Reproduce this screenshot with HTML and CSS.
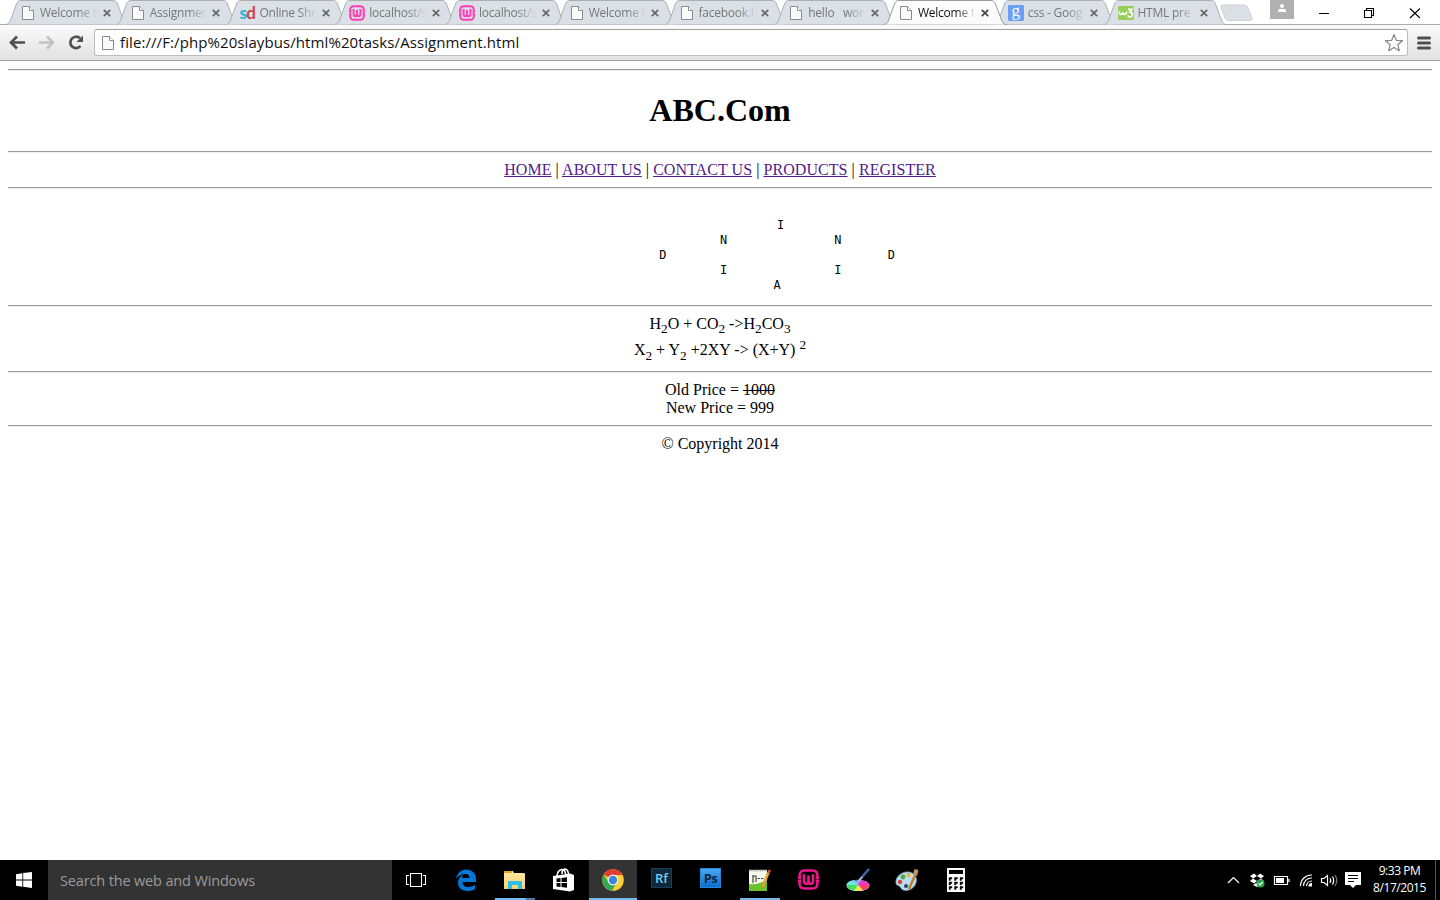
FILE: index.html
```
<!DOCTYPE html>
<html lang="en">
<head>
<meta charset="utf-8">
<title>Assignment</title>
<link rel="stylesheet" href="styles.css">
</head>
<body>
<svg class="defs" width="0" height="0">
  <defs>
    <linearGradient id="active" x1="0" y1="0" x2="0" y2="1"><stop offset="0" stop-color="#fff"/><stop offset="1" stop-color="#fafafa"/></linearGradient>
    <linearGradient id="folder" x1="0" y1="0" x2="0" y2="1"><stop offset="0" stop-color="#ffe9a6"/><stop offset="1" stop-color="#f8d36c"/></linearGradient>
    <symbol id="shape" viewBox="0 0 126 25"><path d="M0 24.5C3 24 4 22 5 19L10.500 4C11.500 1.500 12.500.5 15 .5H107C109.500.5 110.500 1.500 111.500 4L117.500 20C119 23.500 120 24.500 123 24.500"/></symbol>
    <symbol id="page" viewBox="0 0 16 16"><path d="M2.500 1.500H9.500L13.500 5.500V14.500H2.500Z" fill="#fafafa" stroke="#8b8b8b"/><path d="M9.500 1.500V5.500H13.500" fill="#fff" stroke="#8b8b8b"/></symbol>
    <symbol id="wamp" viewBox="0 0 16 16"><path d="M1.200 7V5Q1.200 1.200 5 1.200H11Q14.800 1.200 14.800 5V7M1.200 9V11Q1.200 14.800 5 14.800H11Q14.800 14.800 14.800 11V9M0 6.800H2.500M0 9.200H2.500M13.500 6.800H16M13.500 9.200H16" fill="none" stroke="currentColor" stroke-width="1.900"/><path d="M4.600 4V9Q4.600 11.300 6.300 11.300Q8 11.300 8 9V5V9Q8 11.300 9.700 11.300Q11.400 11.300 11.400 9V4" fill="none" stroke="currentColor" stroke-width="2"/></symbol>
    <symbol id="close" viewBox="0 0 8 8"><path d="M.8.8L7.200 7.200M7.200.8L.8 7.200" stroke="currentColor" stroke-width="1.700"/></symbol>
  </defs>
</svg>
<div class="screen">
  <div class="tabstrip">
    <div class="tab"><svg class="shape"><use href="#shape"/></svg><svg class="fav"><use href="#page"/></svg><span class="label">Welcome t</span><svg class="close"><use href="#close"/></svg></div>
    <div class="tab"><svg class="shape"><use href="#shape"/></svg><svg class="fav"><use href="#page"/></svg><span class="label">Assignmen</span><svg class="close"><use href="#close"/></svg></div>
    <div class="tab"><svg class="shape"><use href="#shape"/></svg><span class="fav sd"><b>s</b><i>d</i></span><span class="label">Online Sho</span><svg class="close"><use href="#close"/></svg></div>
    <div class="tab"><svg class="shape"><use href="#shape"/></svg><svg class="fav pink"><use href="#wamp"/></svg><span class="label">localhost/s</span><svg class="close"><use href="#close"/></svg></div>
    <div class="tab"><svg class="shape"><use href="#shape"/></svg><svg class="fav pink"><use href="#wamp"/></svg><span class="label">localhost/s</span><svg class="close"><use href="#close"/></svg></div>
    <div class="tab"><svg class="shape"><use href="#shape"/></svg><svg class="fav"><use href="#page"/></svg><span class="label">Welcome t</span><svg class="close"><use href="#close"/></svg></div>
    <div class="tab"><svg class="shape"><use href="#shape"/></svg><svg class="fav"><use href="#page"/></svg><span class="label">facebook.h</span><svg class="close"><use href="#close"/></svg></div>
    <div class="tab"><svg class="shape"><use href="#shape"/></svg><svg class="fav"><use href="#page"/></svg><span class="label">hello &nbsp; wor</span><svg class="close"><use href="#close"/></svg></div>
    <div class="tab current"><svg class="shape"><use href="#shape"/></svg><svg class="fav"><use href="#page"/></svg><span class="label">Welcome t</span><svg class="close"><use href="#close"/></svg></div>
    <div class="tab"><svg class="shape"><use href="#shape"/></svg><span class="fav google">g</span><span class="label">css - Goog</span><svg class="close"><use href="#close"/></svg></div>
    <div class="tab"><svg class="shape"><use href="#shape"/></svg><svg class="fav" viewBox="0 0 16 16"><rect y="1" width="16" height="14" rx="1" fill="#98cf5c"/><path d="M1 6.500Q1.500 9.500 3 9.500Q4.500 9.500 4.800 7Q5 9.500 6.500 9.500Q8 9.500 9 6.500" fill="none" stroke="#fff" stroke-width="1.600"/><path d="M10 4.300H14L12 7Q14.300 7 14.300 9.500Q14 12 12 12Q10.200 12 9.800 10.500" fill="none" stroke="#fff" stroke-width="1.700"/></svg><span class="label">HTML pre</span><svg class="close"><use href="#close"/></svg></div>
    <svg class="newtab" viewBox="0 0 34 18"><path d="M3 1H24Q27 1 28 4L32 14Q33 16.500 30 16.500H9Q6 16.500 5 14L1 3.500Q.5 1 3 1Z" fill="#dbe0e7" stroke="#cdd0d4"/></svg>
    <div class="controls">
      <svg width="24" height="19"><rect width="24" height="19" fill="#b0b0b0"/><circle cx="12" cy="6" r="2" fill="#fff"/><path d="M8 12V11Q8 9 10 9H14Q16 9 16 11V12Z" fill="#fff"/></svg>
      <svg class="win" width="120" height="26"><path d="M13 13.500H23M58.500 10.500H65.500V17.500H58.500ZM60.500 10V8.500H67.500V15.500H66" fill="none" stroke="#000" stroke-width="1.100"/><path d="M104 8.500L114 18M114 8.500L104 18" stroke="#000" stroke-width="1.200"/></svg>
    </div>
  </div>
  <div class="toolbar">
    <svg class="nav" width="94" height="35"><g fill="none" stroke-width="2.700"><path d="M11.500 17.500H25M17 11.500L11 17.500L17 23.500" stroke="#505050"/><path d="M39 17.500H52M47 11.500L53 17.500L47 23.500" stroke="#c2c2c2"/><path d="M80.500 21A5.700 5.700 0 1 1 80 13.300" stroke="#505050"/></g><path d="M83 10.500V17H76.500Z" fill="#505050"/></svg>
    <div class="omnibox">
      <svg class="fav" viewBox="0 0 16 16"><use href="#page"/></svg>
      <span class="url">file:///F:/php%20slaybus/html%20tasks/Assignment.html</span>
      <svg class="star" viewBox="0 0 20 20"><path d="M10 1.500L12.300 7.300L18.500 7.700L13.800 11.700L15.300 17.700L10 14.400L4.700 17.700L6.200 11.700L1.500 7.700L7.700 7.300Z" fill="#fff" stroke="#858585" stroke-width="1.200" stroke-linejoin="round"/></svg>
    </div>
    <svg class="menu" width="14" height="14"><path d="M1.500 2H12.500M1.500 7H12.500M1.500 12H12.500" stroke="#505050" stroke-width="3" stroke-linecap="round"/></svg>
  </div>
  <main class="document">
    <hr>
    <h1>ABC.Com</h1>
    <hr>
    <div class="line links"><a href="#">HOME</a> | <a href="#">ABOUT US</a> | <a href="#">CONTACT US</a> | <a href="#">PRODUCTS</a> | <a href="#">REGISTER</a></div>
    <hr>
<pre>

                 I
                 N               N
                D                               D
                 I               I
                A
</pre>
    <hr>
    <div class="formulas">H<sub>2</sub>O + CO<sub>2</sub> -&gt;H<sub>2</sub>CO<sub>3</sub><br>X<sub>2</sub> + Y<sub>2</sub> +2XY -&gt; (X+Y) <sup>2</sup></div>
    <hr>
    <div class="line">Old Price = <s>1000</s><br>New Price = 999</div>
    <hr>
    <div class="line">© Copyright 2014</div>
  </main>
  <footer class="taskbar">
    <div class="start"><svg width="16" height="16" viewBox="0 0 16 16" fill="#fff"><path d="M0 2.200L6.400 1.200V7.500H0ZM7.200 1.100L16 0V7.500H7.200ZM0 8.400H6.400V14.700L0 13.800ZM7.200 8.400H16V16L7.200 14.800Z"/></svg></div>
    <div class="search">Search the web and Windows</div>
    <div class="start"><svg width="20" height="16" fill="none" stroke="#fff" stroke-width="1.100"><path d="M4.500 1.500H15.500V14.500H4.500ZM3 3.500H.5V12.500H3M17 3.500H19.500V12.500H17"/></svg></div>
    <div class="apps">
      <div class="app"><svg viewBox="0 0 24 24"><path d="M2 10.500C3.500 5 7 1.500 12 1.500C18.500 1.500 22 6 22 11V14H8.500C8.500 17.500 11 19 14 19C17 19 19.500 18 21 17V21C19 22.500 16.500 23 13.500 23C8 23 4 20 4 14.500C4 11 6 8.500 9 7C8.500 8 8.200 9 8 10H15.500C15.500 7.500 14 6 11.500 6C8 6 4.500 8 2 10.500Z" fill="#0078d7"/></svg></div>
      <div class="app running split"><svg viewBox="0 0 24 24"><path d="M1 4Q1 3 2 3H10L11 5H21Q22 5 22 6V21H1Z" fill="url(#folder)"/><path d="M1 3H9V5H1Z" fill="#e5a421"/><path d="M5 21V14Q5 13 6 13H18Q19 13 19 14V21H15V17H9V21Z" fill="#2fbdea"/></svg></div>
      <div class="app"><svg viewBox="0 0 24 24"><path d="M1 8L18 5.500L22 7V22L18 23.500L1 21Z" fill="#fff"/><path d="M5 8Q5.500 2.500 9.500 1.500Q13 1 13.500 6M10 6Q10 1 13 1Q16 1.500 16.500 6" fill="none" stroke="#fff" stroke-width="1.600"/><path d="M4.500 10.500L8.500 10V14H4.500ZM9.500 9.900L15 9.200V14H9.500ZM4.500 15H8.500V19L4.500 18.500ZM9.500 15H15V19.800L9.500 19.100Z" fill="#000"/></svg></div>
      <div class="app running chrome"><svg viewBox="0 0 24 24"><circle cx="12" cy="12" r="10.800" fill="#fdcf35"/><path d="M12 12L2.700 6.500A10.800 10.800 0 0 1 21.500 7H12Z" fill="#e23b32"/><path d="M2.700 6.500A10.800 10.800 0 0 0 11 22.800L16 14L12 12L7.500 14Z" fill="#35a853"/><circle cx="12" cy="12" r="5.400" fill="#f5f5f5"/><circle cx="12" cy="12" r="4.200" fill="#3b86d8"/></svg></div>
      <div class="app tile"><span class="rf">Rf</span></div>
      <div class="app tile"><span class="ps">Ps</span></div>
      <div class="app running"><svg viewBox="0 0 24 24"><path d="M1 2H19V23H1Z" fill="#f7f9ee"/><path d="M1 16Q9 17 19 12V23H1Z" fill="#6cc22c"/><path d="M1 2.500H19" stroke="#aaa" stroke-width="2" stroke-dasharray="1.200 1"/><path d="M5 7V15M5 8H8V14M9.500 10.500H12M13 10.500H15.500" stroke="#3a4b34" stroke-width="1.200" fill="none"/><path d="M19.500 4L14.500 17L13.500 21L16 18.500L21.500 5Z" fill="#f4b63a" stroke="#b9761b" stroke-width=".6"/><path d="M19.500 4L20.500 1.500L23 2.500L21.500 5Z" fill="#d55744"/></svg></div>
      <div class="app magenta"><svg><use href="#wamp" x="1" y="1" width="21" height="21"/></svg></div>
      <div class="app"><svg viewBox="0 0 24 24"><ellipse cx="12" cy="17.500" rx="11.500" ry="5.500" fill="#e8e8ff"/><path d="M12 17L.5 17Q1 13 8 12Z" fill="#68e8e0"/><path d="M12 17L8 12Q12 11.500 16 12.500Z" fill="#7b66f0"/><path d="M12 17L16 12.300Q22 13 23.500 17Z" fill="#eb36c6"/><path d="M12 17H23.500Q23 21 17 22.500Z" fill="#fa4268"/><path d="M12 17L17 22.500Q12 23.500 8 22.700Z" fill="#efe94f"/><path d="M12 17L8 22.700Q1 21.500 .5 17Z" fill="#45df64"/><path d="M10 16L17 8" stroke="#a8bad0" stroke-width="2"/><path d="M16 9L23 1" stroke="#4860a8" stroke-width="2.600"/></svg></div>
      <div class="app"><svg viewBox="0 0 24 24"><path d="M1 15C0 9 7 3 14 4C21 5 23 12 20 17C17 23 8 24 6 20C5 17 1 18 1 15Z" fill="#b9ddf1" stroke="#7da9c6" stroke-width=".8"/><circle cx="8" cy="9" r="2.400" fill="#55aa39"/><circle cx="13.500" cy="7" r="2.200" fill="#edb33d"/><circle cx="5" cy="14" r="2.200" fill="#d84331"/><circle cx="11" cy="18" r="2" fill="#234666"/><path d="M21 5L14 21" stroke="#c77a28" stroke-width="2.400"/><path d="M18 6L19.500 1L23.500 2L22 8Z" fill="#c0925f"/></svg></div>
      <div class="app"><svg viewBox="0 0 24 24"><path d="M3 0H21V24H3Z" fill="#fff"/><path d="M5 2H19V6H5Z" fill="#000"/><path d="M5 9.500H8V11H6.500V12.500H5ZM10.500 9.500H13.500V11H12V12.500H10.500ZM16 9.500H19V11H17.500V12.500H16ZM5 14H8V15.500H6.500V17H5ZM10.500 14H13.500V15.500H12V17H10.500ZM16 14H19V15.500H17.500V17H16ZM5 18.500H8V20H6.500V21.500H5ZM10.500 18.500H13.500V20H12V21.500H10.500ZM16 18.500H19V20H17.500V21.500H16Z" fill="#000" stroke="#000" stroke-width=".4"/></svg></div>
    </div>
    <svg class="tray" width="140" height="40" fill="none" stroke="#fff" stroke-width="1.200">
      <path d="M5 23L10.500 17.500L16 23"/>
      <path d="M27 16L31 13.500L34 16L30 18.500ZM41 16L37 13.500L34 16L38 18.500ZM27 21L30 18.500L34 21L31 23.500ZM41 21L38 18.500L34 21L37 23.500ZM30 25L34 22.500L38 25L34 27Z" fill="#fff" stroke="none"/>
      <circle cx="37.500" cy="23.500" r="4" fill="#29a547" stroke="none"/><path d="M35.500 23.500L37 25L39.700 22"/>
      <path d="M51.500 16.500H64.500V24.500H51.500ZM66 19V22"/><path d="M53 18H61V23H53Z" fill="#fff" stroke="none"/>
      <path d="M77.500 26A11 11 0 0 1 89 15M80.500 26A8 8 0 0 1 89 18M83.500 26A5.500 5.500 0 0 1 89 21"/><path d="M85.500 26.500A3 3 0 0 1 89 23V26.500Z" fill="#fff" stroke="none"/>
      <path d="M98.500 18.500H101L104.500 15.500V25.500L101 22.500H98.500ZM107 18Q108.500 20.500 107 23M109.500 16.500Q111.800 20.500 109.500 24.500"/><path d="M112 15Q115.500 20.500 112 26" stroke="#777"/>
      <path d="M122 12H138V25H133L130 28L127 25H122Z" fill="#fff" stroke="none"/><path d="M125 15.500H135M125 18.500H135M125 21.500H131" stroke="#000"/>
    </svg>
    <div class="clock">9:33 PM<br>8/17/2015</div>
  </footer>
</div>
</body>
</html>
```
FILE: styles.css
```
* { box-sizing: border-box; }
body { margin: 0; background: #fff; overflow: hidden; }
.defs { position: absolute; }
.screen { width: 1440px; height: 900px; display: flex; flex-direction: column; font-family: "Open Sans", sans-serif; }
.tabstrip { height: 25px; flex: none; display: flex; padding-left: 6px; border-bottom: 1px solid #a9abae; }
.tab { position: relative; width: 109.75px; height: 25px; flex: none; display: flex; align-items: center; padding-left: 14px; color: #777; }
.shape { position: absolute; left: 0; top: 0; width: 126px; height: 25px; fill: #dbe0e7; stroke: #acafb3; }
.current { z-index: 2; color: #111; }
.current .shape { fill: url(#active); stroke: #999; }
.fav { position: relative; width: 16px; height: 16px; flex: none; margin-top: 1px; }
.pink { color: #ff3db5; }
.label { position: relative; width: 58px; flex: none; margin-left: 4px; font-size: 12px; line-height: 18px; letter-spacing: -.25px; white-space: nowrap; -webkit-mask-image: linear-gradient(90deg, #000 66%, transparent 100%); mask-image: linear-gradient(90deg, #000 66%, transparent 100%); }
.close { position: relative; width: 8px; height: 8px; flex: none; margin: 1px 0 0 4.500px; color: #666; }
.current .close { color: #444; }
.sd { font: bold 17px/15px Lato, sans-serif; letter-spacing: -.8px; color: #35b3e0; }
.sd i { color: #d1444c; font-style: normal; }
.google { background: #6b9ff5; color: #fff; font: 17px/12px "Liberation Serif", serif; text-align: center; border-radius: 1px; }
.newtab { width: 34px; height: 18px; margin: 4px 0 0 7px; flex: none; }
.controls { margin-left: auto; display: flex; flex: none; }
.win { margin: 0 20px 0 12px; width: 114px; }
.toolbar { height: 36px; flex: none; display: flex; align-items: center; background: linear-gradient(#fbfbfb, #e1e1e1); border-bottom: 1px solid #a2a2a2; }
.nav { flex: none; }
.omnibox { width: 1314px; height: 27px; flex: none; display: flex; align-items: center; padding: 0 3px 0 5px; background: #fff; border: 1px solid #bdbdbd; border-top-color: #a0a0a0; border-radius: 3px; }
.omnibox .fav { margin-top: 0; }
.url { flex: 1; margin: 0 0 2px 4px; font-size: 15px; line-height: 20px; letter-spacing: .09px; color: #111; white-space: nowrap; }
.star { width: 20px; height: 20px; flex: none; }
.menu { margin-left: 9px; }
.document { flex: 1; padding: 0 8px; display: flow-root; font-family: "Liberation Serif", serif; font-size: 16px; color: #000; text-align: center; }
hr { margin: 8px 0; height: 2px; border: 0; border-top: 1px solid #9a9a9a; border-bottom: 1px solid #eee; }
h1 { margin: 21px 0 22px; font-size: 32px; line-height: 37px; }
.line { line-height: 18px; }
.links { letter-spacing: .055px; }
a { color: #551a8b; }
pre { margin: 13px 0; height: 90px; padding-top: 1px; font: 11.87px/15px "DejaVu Sans Mono", monospace; }
.formulas { height: 48px; line-height: normal; }
.taskbar { height: 40px; flex: none; display: flex; background: #000; color: #fff; }
.start { width: 48px; display: grid; place-items: center; }
.search { width: 344px; background: #333; color: #9b9b9b; font-size: 14.5px; line-height: 41px; letter-spacing: -.15px; padding-left: 12px; white-space: nowrap; }
.apps { display: flex; gap: 1px; margin-left: 2px; }
.app { width: 48px; height: 40px; display: flex; justify-content: center; padding-top: 8px; }
.app svg { width: 24px; height: 24px; }
.running { background: linear-gradient(#76b9ed, #76b9ed) 4px 38px / 40px 2px no-repeat; }
.split { background: linear-gradient(90deg, #76b9ed 31px, #4d7ba3 31px) 4px 38px / 40px 2px no-repeat; }
.chrome { background: linear-gradient(#76b9ed, #76b9ed) 0 38px / 48px 2px no-repeat #333; }
.tile span { width: 21px; height: 20px; margin-right: 1px; font-size: 13px; line-height: 18px; text-align: center; }
.rf { background: #10283c; border: 1px solid #1d405a; color: #6fd0ee; font-weight: 600; }
.ps { background: linear-gradient(#4ba6f6, #0c6fcb); border: 1px solid #2687d8; color: #092746; font-weight: bold; letter-spacing: -.5px; }
.magenta { color: #f0148c; }
.tray { margin-left: auto; flex: none; }
.clock { width: 73px; margin-right: 4px; padding: 2px 0 0 1px; border-right: 1px solid #555; font-size: 12px; line-height: 17px; letter-spacing: -.45px; text-align: center; }
```
